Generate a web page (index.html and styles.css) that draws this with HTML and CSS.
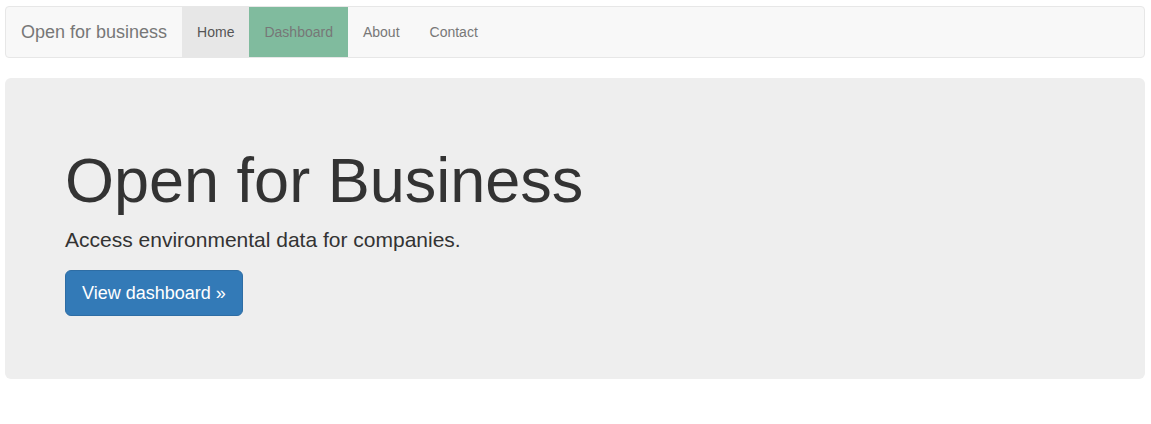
FILE: index.html
```html
<!DOCTYPE html>
<html lang="en">
<head>
<meta charset="utf-8">
<title>Open for business</title>
<link rel="stylesheet" href="styles.css">
</head>
<body>
<div class="page">
  <nav class="navbar">
    <a class="brand" href="#">Open for business</a>
    <ul class="nav">
      <li class="active"><a href="#">Home</a></li>
      <li class="highlight"><a href="#">Dashboard</a></li>
      <li><a href="#">About</a></li>
      <li><a href="#">Contact</a></li>
    </ul>
  </nav>
  <section class="jumbotron">
    <h1>Open for Business</h1>
    <p>Access environmental data for companies.</p>
    <p class="actions"><a class="btn" href="#">View dashboard »</a></p>
  </section>
</div>
</body>
</html>
```
FILE: styles.css
```css
* { box-sizing: border-box; }
html, body { margin: 0; padding: 0; }
body {
  font-family: "Liberation Sans", Arial, Helvetica, sans-serif;
  font-size: 14px;
  line-height: 1.428571;
  color: #333;
  background: #fff;
}
.page { padding: 6px 6px 0 5px; }
.navbar {
  display: flex;
  align-items: stretch;
  min-height: 52px;
  background: #f8f8f8;
  border: 1px solid #e7e7e7;
  border-radius: 4px;
  margin-bottom: 20px;
}
.brand {
  display: block;
  padding: 15px;
  height: 50px;
  font-size: 18px;
  line-height: 20px;
  color: #777;
  text-decoration: none;
}
.nav {
  display: flex;
  list-style: none;
  margin: 0;
  padding: 0;
}
.nav a {
  display: block;
  padding: 15px;
  line-height: 20px;
  color: #777;
  text-decoration: none;
}
.nav .active a { background: #e7e7e7; color: #555; }
.nav .highlight a { background: #80bb9e; color: #777; }
.jumbotron {
  background: #eee;
  border-radius: 6px;
  padding: 48px 60px;
}
.jumbotron h1 {
  margin: 20px 0 10px;
  font-size: 63px;
  font-weight: 500;
  line-height: 1.1;
  color: inherit;
}
.jumbotron p {
  margin: 0 0 15px;
  font-size: 21px;
  font-weight: 200;
}
.btn {
  display: inline-block;
  padding: 10px 16px;
  font-size: 18px;
  line-height: 1.3333333;
  color: #fff;
  background: #337ab7;
  border: 1px solid #2e6da4;
  border-radius: 6px;
  text-decoration: none;
}
```
